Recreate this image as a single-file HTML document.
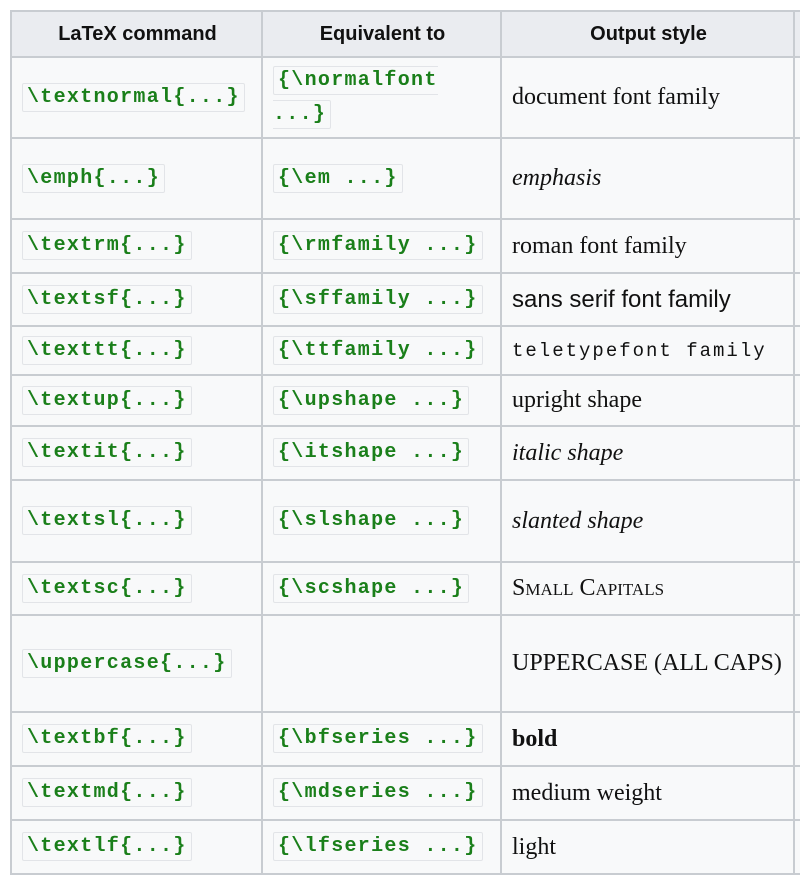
<!DOCTYPE html>
<html><head><meta charset="utf-8"><style>
html,body{margin:0;padding:0;background:#fff;width:800px;height:881px;overflow:hidden}
table{position:absolute;left:10px;top:10px;width:805px;border-collapse:collapse;background:#f8f9fa;table-layout:fixed}
td,th{border:2px solid #c8ccd1;padding:0 8px 0 10px;vertical-align:middle;text-align:left}
th{background:#eaecf0;font:bold 20px "Liberation Sans",sans-serif;text-align:center;color:#111;height:44px}
td{font:24px "Liberation Serif",serif;color:#111}
code{font:bold 20px "Liberation Mono",monospace;letter-spacing:1.3px;color:#1a7f1a;background:#f8f9fa;border:1.5px solid #e2e4e8;border-radius:2px;padding:2px 4px;-webkit-box-decoration-break:slice;box-decoration-break:slice;line-height:34px}
</style></head><body>
<table>
<colgroup><col style="width:251px"><col style="width:239px"><col style="width:293px"><col style="width:22px"></colgroup>
<tr><th>LaTeX command</th><th>Equivalent to</th><th>Output style</th><th></th></tr>
<tr style="height:81px"><td><code>\textnormal{...}</code></td><td><code>{\normalfont ...}</code></td><td>document font family</td><td></td></tr>
<tr style="height:81px"><td><code>\emph{...}</code></td><td><code>{\em ...}</code></td><td><i>emphasis</i></td><td></td></tr>
<tr style="height:54px"><td><code>\textrm{...}</code></td><td><code>{\rmfamily ...}</code></td><td>roman font family</td><td></td></tr>
<tr style="height:53px"><td><code>\textsf{...}</code></td><td><code>{\sffamily ...}</code></td><td style="font-family:'Liberation Sans',sans-serif">sans serif font family</td><td></td></tr>
<tr style="height:49px"><td><code>\texttt{...}</code></td><td><code>{\ttfamily ...}</code></td><td style="font:19px 'Liberation Mono',monospace;letter-spacing:2px">teletypefont family</td><td></td></tr>
<tr style="height:51px"><td><code>\textup{...}</code></td><td><code>{\upshape ...}</code></td><td>upright shape</td><td></td></tr>
<tr style="height:54px"><td><code>\textit{...}</code></td><td><code>{\itshape ...}</code></td><td><i>italic shape</i></td><td></td></tr>
<tr style="height:82px"><td><code>\textsl{...}</code></td><td><code>{\slshape ...}</code></td><td><i>slanted shape</i></td><td></td></tr>
<tr style="height:53px"><td><code>\textsc{...}</code></td><td><code>{\scshape ...}</code></td><td style="font-variant:small-caps">Small Capitals</td><td></td></tr>
<tr style="height:97px"><td><code>\uppercase{...}</code></td><td></td><td style="line-height:43px">UPPERCASE (ALL CAPS)</td><td></td></tr>
<tr style="height:54px"><td><code>\textbf{...}</code></td><td><code>{\bfseries ...}</code></td><td><b>bold</b></td><td></td></tr>
<tr style="height:54px"><td><code>\textmd{...}</code></td><td><code>{\mdseries ...}</code></td><td>medium weight</td><td></td></tr>
<tr style="height:54px"><td><code>\textlf{...}</code></td><td><code>{\lfseries ...}</code></td><td>light</td><td></td></tr>
</table>
</body></html>
